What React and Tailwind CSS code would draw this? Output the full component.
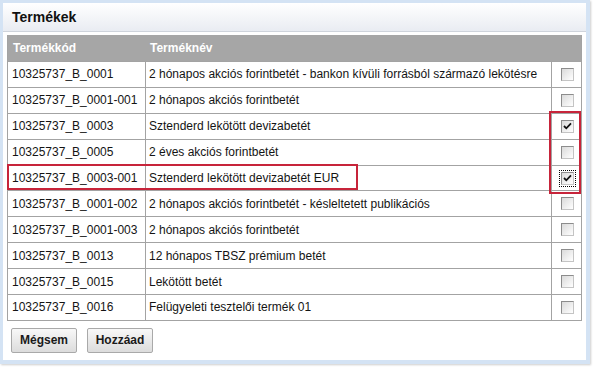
import { useState } from 'react';

const products = [
  { code: '10325737_B_0001', name: '2 hónapos akciós forintbetét - bankon kívüli forrásból származó lekötésre', checked: false },
  { code: '10325737_B_0001-001', name: '2 hónapos akciós forintbetét', checked: false },
  { code: '10325737_B_0003', name: 'Sztenderd lekötött devizabetét', checked: true },
  { code: '10325737_B_0005', name: '2 éves akciós forintbetét', checked: false },
  { code: '10325737_B_0003-001', name: 'Sztenderd lekötött devizabetét EUR', checked: true, focus: true },
  { code: '10325737_B_0001-002', name: '2 hónapos akciós forintbetét - késleltetett publikációs', checked: false },
  { code: '10325737_B_0001-003', name: '2 hónapos akciós forintbetét', checked: false },
  { code: '10325737_B_0013', name: '12 hónapos TBSZ prémium betét', checked: false },
  { code: '10325737_B_0015', name: 'Lekötött betét', checked: false },
  { code: '10325737_B_0016', name: 'Felügyeleti tesztelői termék 01', checked: false },
];

function Checkbox({ checked, focus, onClick }) {
  return (
    <span
      onClick={onClick}
      className={`flex items-center justify-center p-[1px] ${focus ? 'outline-1 outline-dotted outline-black' : ''}`}
    >
      <span className="flex h-[13px] w-[13px] items-center justify-center border border-[#8c8c8c] border-r-[#c4c4c4] border-b-[#c4c4c4] bg-gradient-to-br from-[#dadada] to-white">
        {checked && (
          <svg width="9" height="8" viewBox="0 0 9 8">
            <path d="M1 4 L3.3 6.3 L8 1.3" fill="none" stroke="#111" strokeWidth="1.8" />
          </svg>
        )}
      </span>
    </span>
  );
}

function Button({ children }) {
  return (
    <button className="h-[25px] w-[66px] rounded-[2px] border border-[#a9a9a9] bg-gradient-to-b from-[#f8f8f8] to-[#dcdcdc] font-['Liberation_Sans',Arial,sans-serif] text-[12px] font-bold text-[#1a1a1a]">
      {children}
    </button>
  );
}

export default function App() {
  const [rows, setRows] = useState(products);

  const toggle = (i) => setRows(rows.map((r, j) => (j === i ? { ...r, checked: !r.checked } : r)));

  return (
    <div className="h-[369px] w-[596px] bg-white font-['Liberation_Sans',Arial,sans-serif]">
      <div className="relative h-[364px] w-[590px] border-t-[3px] border-r-[4px] border-b-[4px] border-l-[3px] border-[#d4e3f4] bg-white shadow-[1px_1px_2px_rgba(0,0,0,0.2)]">
        <div className="flex h-[29px] items-center border-b border-[#cfd4dc] bg-gradient-to-b from-white to-[#e9ecf2] pl-[9px] text-[14px] font-bold text-[#111]">
          Termékek
        </div>

        <div className="ml-[4px] mt-[3px] w-[575px] border-x border-b border-[#a3a3a3]">
          <div className="grid h-[26px] grid-cols-[138px_406px_29px] bg-[#a6a6a6] text-[12px] font-bold text-white">
            <div className="flex items-center pl-[5px]">Termékkód</div>
            <div className="flex items-center pl-[4px]">Terméknév</div>
            <div></div>
          </div>
          {rows.map((row, i) => (
            <div
              key={row.code}
              className="grid h-[25.9px] grid-cols-[138px_406px_29px] border-t border-[#a3a3a3] text-[12px] text-[#141414]"
            >
              <div className="flex items-center overflow-hidden border-r border-[#a3a3a3] pl-[4px] whitespace-nowrap">{row.code}</div>
              <div className="flex items-center overflow-hidden border-r border-[#a3a3a3] pl-[3px] whitespace-nowrap">{row.name}</div>
              <div className="flex items-center justify-center pl-[1px]">
                <Checkbox checked={row.checked} focus={row.focus} onClick={() => toggle(i)} />
              </div>
            </div>
          ))}
        </div>

        <div className="ml-[8px] mt-[7px] flex gap-[10px]">
          <Button>Mégsem</Button>
          <Button>Hozzáad</Button>
        </div>

        <div className="pointer-events-none absolute left-[4px] top-[161px] h-[26px] w-[351px] border-2 border-[#c7243a]"></div>
        <div className="pointer-events-none absolute left-[546px] top-[108px] h-[83px] w-[32px] border-2 border-[#c7243a]"></div>
      </div>
    </div>
  );
}
